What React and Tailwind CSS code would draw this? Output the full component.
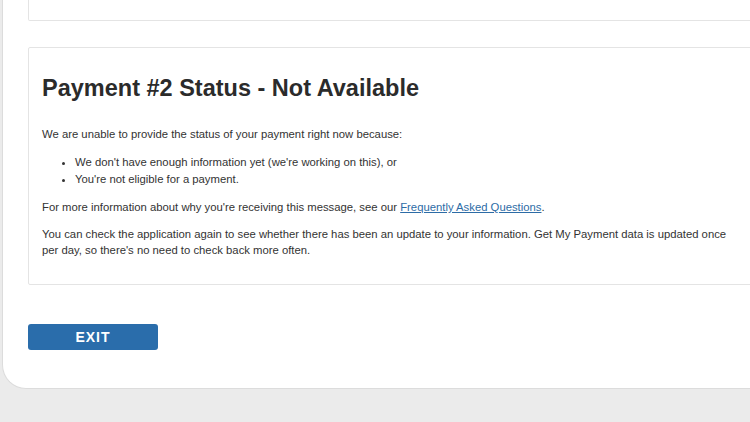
import React from 'react';

const bullets = [
  "We don't have enough information yet (we're working on this), or",
  "You're not eligible for a payment.",
];

const App = () => {
  return (
    <div className="h-[422px] w-[750px] overflow-hidden bg-[#ebebeb] font-['Liberation_Sans',Arial,sans-serif] text-[#333]">
      <div className="ml-[2px] h-[389px] w-[770px] rounded-bl-[24px] border-b border-l border-[#dcdcdc] bg-white pl-[25px]">
        {/* previous card, cut off at the top */}
        <div className="h-[21px] w-[760px] rounded-b-[2px] border-x border-b border-[#e4e4e4]" />

        {/* Payment status card */}
        <div className="mt-[26px] h-[238px] w-[760px] rounded-[2px] border border-[#e4e4e4] px-[13px] pt-[26px]">
          <h2 className="text-[23.5px] font-bold leading-[28px] text-[#2b2b2b]">
            Payment #2 Status - Not Available
          </h2>
          <p className="mt-[24px] text-[11.3px] leading-[17px]">
            We are unable to provide the status of your payment right now because:
          </p>
          <ul className="mt-[11px] list-disc pl-[33px] text-[11.3px] leading-[17px]">
            {bullets.map((b) => (
              <li key={b}>{b}</li>
            ))}
          </ul>
          <p className="mt-[11px] text-[11.3px] leading-[17px]">
            For more information about why you're receiving this message, see our{' '}
            <a href="#" className="text-[#2d6ca6] underline">Frequently Asked Questions</a>.
          </p>
          <p className="mt-[10px] w-[700px] text-[11.3px] leading-[16px]">
            You can check the application again to see whether there has been an update to your information. Get My Payment data is updated once per day, so there's no need to check back more often.
          </p>
        </div>

        <button className="mt-[39px] flex h-[26px] w-[130px] items-center justify-center rounded-[3px] bg-[#2a6dab] text-[14px] font-bold tracking-[1px] text-white">
          EXIT
        </button>
      </div>
    </div>
  );
};

export default App;
